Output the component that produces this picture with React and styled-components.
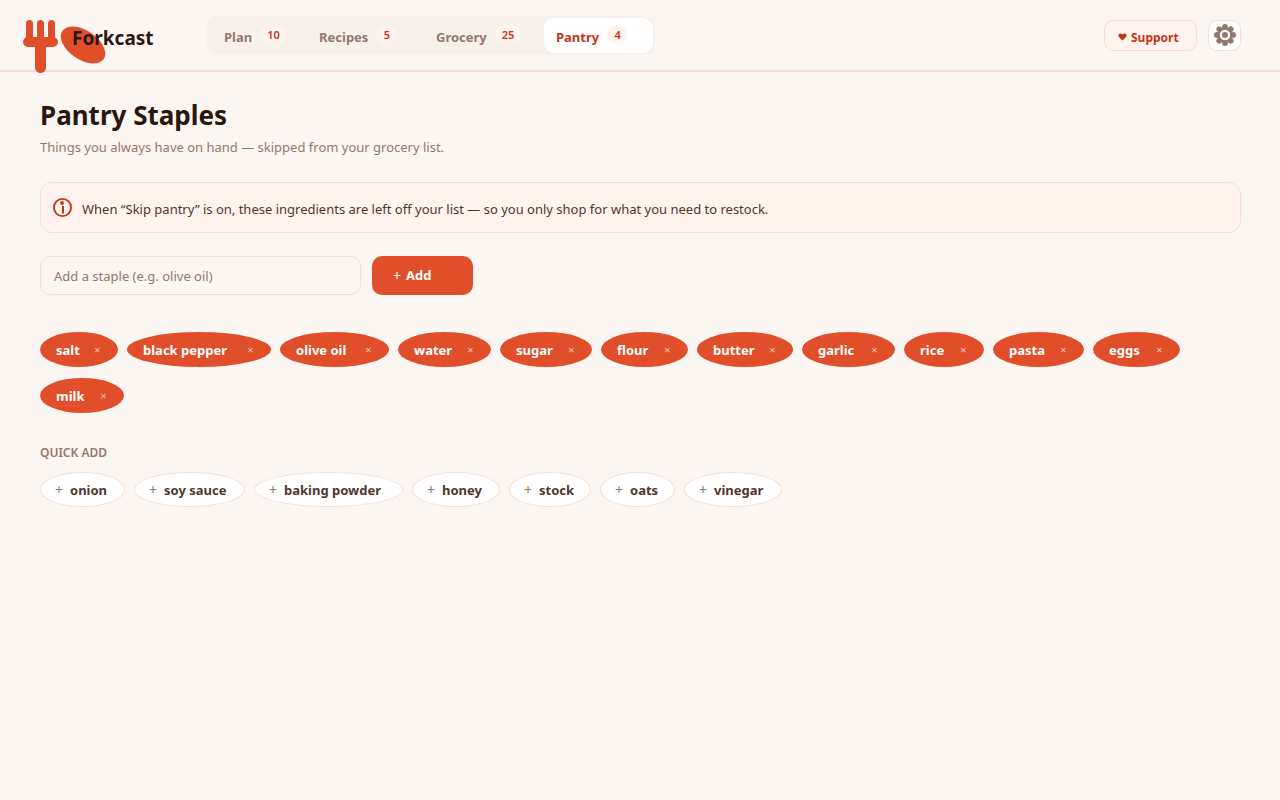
import React from "react";
import styled, { createGlobalStyle, css } from "styled-components";

const c = {
  page: "#fcf6f2",
  line: "#f5ded8",
  accent: "#e14e2a",
  deep: "#c23616",
  ink: "#2b1610",
  body: "#52362d",
  muted: "#93796d",
  tint: "#fff3ed",
  track: "#f8f0eb",
};

const GlobalStyle = createGlobalStyle`
  * { box-sizing: border-box; }
  body {
    margin: 0;
    background: ${c.page};
    color: ${c.ink};
    font-family: "Noto Sans", "Open Sans", sans-serif;
    font-size: 13px;
  }
  button, input { font: inherit; }
  button { cursor: pointer; }
`;

const Header = styled.header`
  display: flex;
  align-items: flex-start;
  height: 72px;
  padding: 16px 39px 0 23px;
  border-bottom: 2px solid ${c.line};
`;

const Brand = styled.a`
  position: relative;
  display: block;
  width: 183px;
  height: 54px;
  padding-left: 49px;
  color: ${c.ink};
  font-size: 19px;
  font-weight: 700;
  line-height: 44px;
  text-decoration: none;
`;

const BrandName = styled.span`
  position: relative;
  z-index: 1;
`;

const Logo = styled.svg`
  position: absolute;
  left: 0;
  top: 3px;
`;

const Nav = styled.nav`
  display: flex;
  height: 39px;
  padding: 2px;
  border-radius: 12px;
  background: ${c.track};
`;

const Tab = styled.a`
  display: flex;
  align-items: flex-start;
  gap: 8px;
  width: ${(p) => p.$width}px;
  padding: 7px 0 0 ${(p) => (p.$active ? 12 : 16)}px;
  border-radius: 10px;
  color: ${(p) => (p.$active ? c.deep : c.muted)};
  background: ${(p) => (p.$active ? "#fff" : "transparent")};
  font-size: 13px;
  font-weight: 700;
  line-height: 24px;
  text-decoration: none;
`;

const Count = styled.span`
  min-width: 21px;
  height: 19px;
  padding: 0 7px;
  border-radius: 10px;
  background: ${c.tint};
  color: ${c.deep};
  font-size: 11px;
  font-weight: 600;
  line-height: 20px;
  text-align: center;
`;

const Actions = styled.div`
  display: flex;
  gap: 11px;
  margin: 4px 0 0 auto;
`;

const Support = styled.button`
  display: flex;
  align-items: center;
  gap: 4px;
  width: 93px;
  height: 31px;
  padding: 3px 0 0 13px;
  border: 1px solid ${c.line};
  border-radius: 9px;
  background: ${c.tint};
  color: ${c.deep};
  font-size: 12px;
  font-weight: 700;
`;

const IconButton = styled.button`
  display: grid;
  justify-items: center;
  align-items: start;
  width: 33px;
  height: 31px;
  padding: 3px 0 0;
  border: 1px solid ${c.line};
  border-radius: 9px;
  background: #fff;
`;

const Main = styled.main`
  padding: 24px 39px 40px 40px;
`;

const Title = styled.h1`
  margin: 0;
  font-size: 26px;
  font-weight: 700;
  line-height: 38px;
`;

const Subtitle = styled.p`
  margin: 2px 0 0;
  color: ${c.muted};
  line-height: 22px;
`;

const Notice = styled.div`
  display: flex;
  align-items: center;
  gap: 9px;
  min-height: 51px;
  margin-top: 24px;
  padding: 0 12px;
  border: 1px solid ${c.line};
  border-radius: 12px;
  background: ${c.tint};
  color: ${c.body};
  line-height: 20px;
`;

const NoticeText = styled.p`
  margin: 3px 0 0;
`;

const AddForm = styled.form`
  display: flex;
  gap: 11px;
  margin-top: 23px;
`;

const Field = styled.input`
  width: 321px;
  height: 39px;
  padding: 0 13px;
  border: 1px solid ${c.line};
  border-radius: 10px;
  background: ${c.page};
  color: ${c.ink};
  &::placeholder { color: ${c.muted}; opacity: 1; }
`;

const AddButton = styled.button`
  display: flex;
  align-items: center;
  gap: 5px;
  width: 101px;
  height: 39px;
  padding: 0 0 1px 21px;
  border: 0;
  border-radius: 10px;
  background: ${c.accent};
  color: #fff;
  font-weight: 700;
`;

const Plus = styled.span`
  font-size: 14px;
  font-weight: 400;
  color: ${(p) => p.$color || "inherit"};
`;

const ChipList = styled.ul`
  display: flex;
  flex-wrap: wrap;
  gap: 11px 9px;
  margin: ${(p) => p.$top}px 0 0;
  padding: 0;
  list-style: none;
`;

const chip = css`
  display: flex;
  align-items: center;
  width: ${(p) => p.$width}px;
  height: 35px;
  border-radius: 50%;
  font-weight: 700;
  white-space: nowrap;
`;

const Staple = styled.li`
  ${chip}
  justify-content: space-between;
  padding: 0 15px 0 16px;
  background: ${c.accent};
  color: #fff;
`;

const Remove = styled.button`
  width: 11px;
  height: 20px;
  padding: 0;
  border: 0;
  background: transparent;
  color: #f6c3b5;
  font-size: 11px;
  font-weight: 400;
  line-height: 18px;
`;

const QuickChip = styled.button`
  ${chip}
  padding: 0 0 0 14px;
  gap: 7px;
  border: 1px solid ${c.line};
  background: #fff;
  color: ${c.body};
`;

const SectionTitle = styled.h2`
  margin: 30px 0 0;
  color: ${c.muted};
  font-size: 12px;
  font-weight: 600;
  line-height: 20px;
`;

const tabs = [
  { label: "Plan", count: 10, width: 95 },
  { label: "Recipes", count: 5, width: 117 },
  { label: "Grocery", count: 25, width: 124 },
  { label: "Pantry", count: 4, width: 109, active: true },
];

const staples = [
  { name: "salt", width: 78 },
  { name: "black pepper", width: 144 },
  { name: "olive oil", width: 109 },
  { name: "water", width: 93 },
  { name: "sugar", width: 92 },
  { name: "flour", width: 87 },
  { name: "butter", width: 96 },
  { name: "garlic", width: 93 },
  { name: "rice", width: 80 },
  { name: "pasta", width: 91 },
  { name: "eggs", width: 87 },
  { name: "milk", width: 84 },
];

const quick = [
  { name: "onion", width: 85 },
  { name: "soy sauce", width: 111 },
  { name: "baking powder", width: 149 },
  { name: "honey", width: 88 },
  { name: "stock", width: 82 },
  { name: "oats", width: 75 },
  { name: "vinegar", width: 98 },
];

const teeth = [0, 45, 90, 135, 180, 225, 270, 315];

export default function App() {
  return (
    <>
      <GlobalStyle />
      <Header>
        <Brand href="#">
          <Logo width="84" height="55" viewBox="0 0 84 55" aria-hidden="true">
            <g stroke={c.accent} strokeLinecap="round" fill="none">
              <path d="M6.500 4.500V22M17.500 4.500V22M28.500 4.500V22" strokeWidth="7" />
              <path d="M5 23H30" strokeWidth="10" />
              <path d="M17.500 24V48.500" strokeWidth="11" />
            </g>
            <ellipse cx="60" cy="26" rx="25" ry="14.500" transform="rotate(34 60 26)" fill={c.accent} />
          </Logo>
          <BrandName>Forkcast</BrandName>
        </Brand>
        <Nav>
          {tabs.map((t) => (
            <Tab key={t.label} href="#" $active={t.active} $width={t.width}>
              {t.label}
              <Count>{t.count}</Count>
            </Tab>
          ))}
        </Nav>
        <Actions>
          <Support type="button">
            <svg width="9" height="8" viewBox="0 0 9 8" aria-hidden="true">
              <path d="M4.500 7.500L1 4C-.5 2 1 .3 2.700.4 3.600.5 4.200 1 4.500 1.600 4.800 1 5.400.5 6.300.4 8 .3 9.500 2 8 4Z" fill={c.deep} />
            </svg>
            Support
          </Support>
          <IconButton type="button" aria-label="Settings">
            <svg width="22" height="22" viewBox="0 0 22 22" aria-hidden="true">
              <circle cx="11" cy="11" r="6.500" fill="none" stroke={c.muted} strokeWidth="2.400" />
              <circle cx="11" cy="11" r="3" fill={c.muted} />
              {teeth.map((a) => (
                <circle key={a} cx="11" cy="2.900" r="2.900" fill={c.muted} transform={`rotate(${a} 11 11)`} />
              ))}
            </svg>
          </IconButton>
        </Actions>
      </Header>
      <Main>
        <Title>Pantry Staples</Title>
        <Subtitle>Things you always have on hand — skipped from your grocery list.</Subtitle>
        <Notice>
          <svg width="20" height="20" viewBox="0 0 20 20" aria-hidden="true">
            <circle cx="9.500" cy="9.500" r="8.600" fill="none" stroke={c.deep} strokeWidth="1.800" />
            <circle cx="9" cy="5" r="1.900" fill={c.deep} />
            <path d="M10 8V15.500" stroke={c.deep} strokeWidth="2" />
          </svg>
          <NoticeText>
            When “Skip pantry” is on, these ingredients are left off your list — so you only shop for what you need to restock.
          </NoticeText>
        </Notice>
        <AddForm onSubmit={(e) => e.preventDefault()}>
          <Field aria-label="Add a staple" placeholder="Add a staple (e.g. olive oil)" />
          <AddButton type="submit"><Plus>+</Plus>Add</AddButton>
        </AddForm>
        <ChipList $top={37}>
          {staples.map((s) => (
            <Staple key={s.name} $width={s.width}>
              {s.name}
              <Remove type="button" aria-label={`Remove ${s.name}`}>×</Remove>
            </Staple>
          ))}
        </ChipList>
        <SectionTitle>QUICK ADD</SectionTitle>
        <ChipList $top={9}>
          {quick.map((q) => (
            <li key={q.name}>
              <QuickChip type="button" $width={q.width}><Plus $color={c.muted}>+</Plus>{q.name}</QuickChip>
            </li>
          ))}
        </ChipList>
      </Main>
    </>
  );
}
